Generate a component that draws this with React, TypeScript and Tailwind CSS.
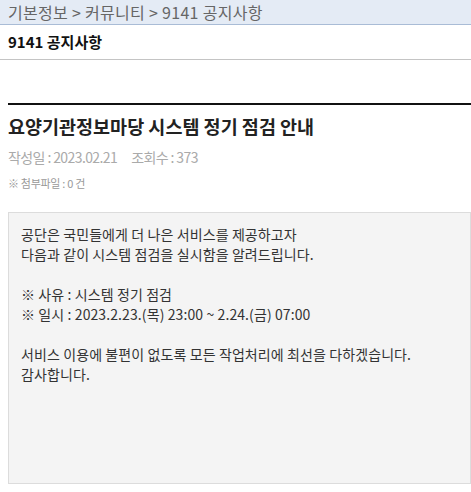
export default function App() {
  const font = { fontFamily: '"Noto Sans CJK KR", "Noto Sans", sans-serif' };
  return (
    <div className="w-[471px] h-[492px] overflow-hidden bg-white" style={font}>
      {/* breadcrumb */}
      <div className="h-[25px] bg-[#e4ebf5] border-b border-[#a9bcd6] px-2 flex items-center text-[16px] text-[#666] leading-none tracking-[0.3px]">
        기본정보 &gt; 커뮤니티 &gt; 9141 공지사항
      </div>
      <div className="h-[35px] border-b border-[#c4c4c4] px-2 flex items-center text-[15px] font-bold text-[#111]">
        9141 공지사항
      </div>

      <div className="pl-2 pt-[43px]">
        <div className="border-t-2 border-[#111]" />
        <h1 className="mt-[8px] text-[18.5px] font-bold text-[#222] leading-[26px]">
          요양기관정보마당 시스템 정기 점검 안내
        </h1>
        <div className="mt-[8px] flex gap-[14px] text-[14px] text-[#aaa] leading-[20px] tracking-[-0.6px]">
          <span>작성일 : 2023.02.21</span>
          <span>조회수 : 373</span>
        </div>
        <div className="mt-[8px] text-[11px] text-[#999] leading-[16px] tracking-[-0.3px]">※ 첨부파일 : 0 건</div>

        <div className="mt-[21px] h-[272px] bg-[#f4f4f4] border border-[#dcdcdc] px-3 pt-[11px] text-[14px] text-[#333] leading-[20px] tracking-[0.1px]">
          <p>공단은 국민들에게 더 나은 서비스를 제공하고자</p>
          <p>다음과 같이 시스템 점검을 실시함을 알려드립니다.</p>
          <p>&nbsp;</p>
          <p>※ 사유 : 시스템 정기 점검</p>
          <p>※ 일시 : 2023.2.23.(목) 23:00 ~ 2.24.(금) 07:00</p>
          <p>&nbsp;</p>
          <p>서비스 이용에 불편이 없도록 모든 작업처리에 최선을 다하겠습니다.</p>
          <p>감사합니다.</p>
        </div>
      </div>
    </div>
  );
}
